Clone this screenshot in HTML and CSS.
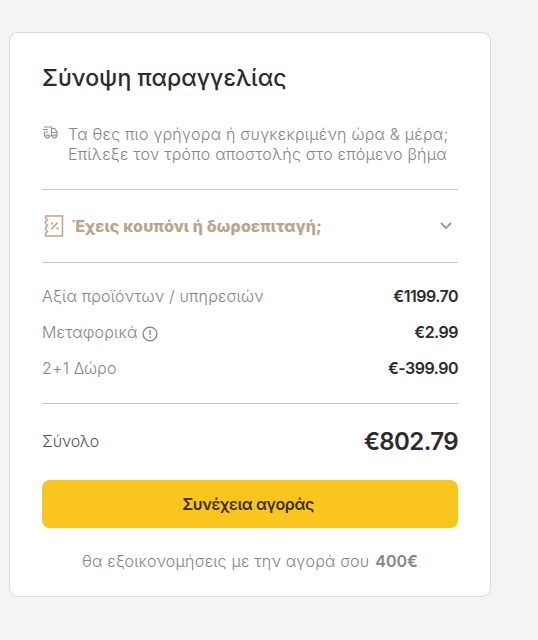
FILE: index.html
```html
<!DOCTYPE html>
<html lang="el">
<head>
<meta charset="utf-8">
<title>Σύνοψη παραγγελίας</title>
<link rel="stylesheet" href="styles.css">
</head>
<body>
<main class="card">
  <h1 class="title">Σύνοψη παραγγελίας</h1>
  <div class="delivery">
    <svg class="truck" width="15" height="13" viewBox="0 0 15 13" fill="none" stroke="#929292" stroke-width="1.200"><path d="M1 1h7.500v9H6.500M8.500 2.500h3l2.500 3.500v4h-1M8.500 6.500h5.500M0 3.500h5M1 6h4M1.500 6v4h1M6.500 10h3.500"/><circle cx="4.500" cy="10.500" r="1.700"/><circle cx="11.500" cy="10.500" r="1.700"/></svg>
    <p class="delivery-text">Τα θες πιο γρήγορα ή συγκεκριμένη ώρα &amp; μέρα;<br>Επίλεξε τον τρόπο αποστολής στο επόμενο βήμα</p>
  </div>
  <div class="coupon">
    <svg width="20" height="22" viewBox="0 0 20 22" fill="none" stroke="#b9a587" stroke-width="1.500"><path d="M1.500 1h17v20h-17v-2.500l2-2-2-2v-2l2-2-2-2v-2l2-2-2-1.500z"/><path d="M7.500 14.500l6-7"/><circle cx="8" cy="8.500" r=".4"/><circle cx="13.500" cy="13.500" r=".4"/></svg>
    <span class="coupon-label">Έχεις κουπόνι ή δωροεπιταγή;</span>
    <svg class="chevron" width="12" height="8" viewBox="0 0 12 8" fill="none" stroke="#a99c86" stroke-width="2"><path d="M1 1l5 5 5-5"/></svg>
  </div>
  <div class="rows">
    <div class="row"><span class="label">Αξία προϊόντων / υπηρεσιών</span><b class="price">€1199.70</b></div>
    <div class="row"><span class="label">Μεταφορικά</span><svg class="info" width="16" height="16" viewBox="0 0 16 16" fill="none" stroke="#808080" stroke-width="1.300"><circle cx="8" cy="8" r="6.900"/><path d="M8 4v5M8 10.500v1.500"/></svg><b class="price">€2.99</b></div>
    <div class="row"><span class="label">2+1 Δώρο</span><b class="price">€-399.90</b></div>
  </div>
  <div class="total"><span class="total-label">Σύνολο</span><b class="total-price">€802.79</b></div>
  <button class="continue" type="button">Συνέχεια αγοράς</button>
  <p class="saving"><span class="saving-text">θα εξοικονομήσεις με την αγορά σου</span><b>400€</b></p>
</main>
</body>
</html>
```
FILE: styles.css
```css
* { box-sizing: border-box; }
body { margin: 0; padding: 32px 47px 0 9px; height: 640px; background: #f4f4f4; font-family: Inter, "Noto Sans", sans-serif; color: #2b2b2b; overflow: hidden; }
.card { width: 482px; height: 565px; padding: 0 32px; border: 1px solid #dadada; border-radius: 9px; background: #fff; white-space: nowrap; }
.title { margin: 30px 0 0; height: 30px; line-height: 30px; font-size: 23px; font-weight: 550; letter-spacing: .05px; }
.delivery { display: flex; margin-top: 31px; height: 66px; border-bottom: 1px solid #c6c6c6; }
.truck { margin: 2px 10px 0 1px; }
.delivery-text { margin: 0; font-size: 16px; line-height: 20px; font-weight: 300; letter-spacing: .22px; color: #858585; }
.coupon { display: flex; align-items: center; height: 73px; padding: 0 6px 0 2px; border-bottom: 1px solid #c6c6c6; }
.coupon-label { margin-left: 8px; font-size: 16px; font-weight: 800; letter-spacing: .16px; color: #b9a587; }
.chevron { margin-left: auto; }
.rows { height: 141px; padding-top: 15px; border-bottom: 1px solid #c6c6c6; }
.row { display: flex; align-items: center; height: 36px; font-size: 16px; }
.label { font-weight: 300; letter-spacing: .18px; color: #858585; }
.info { margin: 3px 0 0 5px; }
.price { margin-left: auto; font-weight: 600; letter-spacing: -.5px; }
.total { display: flex; align-items: center; justify-content: space-between; height: 76px; padding-bottom: 2px; }
.total-label { font-size: 16px; font-weight: 300; letter-spacing: -.3px; color: #555; }
.total-price { font-size: 24px; font-weight: 600; letter-spacing: -.6px; }
.continue { display: block; width: 100%; height: 48px; padding: 0 4px 0 0; border: 0; border-radius: 8px; background: #fac51d; font: 600 16px Inter, "Noto Sans", sans-serif; letter-spacing: -.4px; color: #3b2d16; }
.saving { display: flex; justify-content: center; gap: 6px; margin: 23px 0 0; line-height: 20px; font-size: 16px; font-weight: 300; color: #858585; }
.saving-text { letter-spacing: .2px; }
.saving b { font-weight: 600; }
```
